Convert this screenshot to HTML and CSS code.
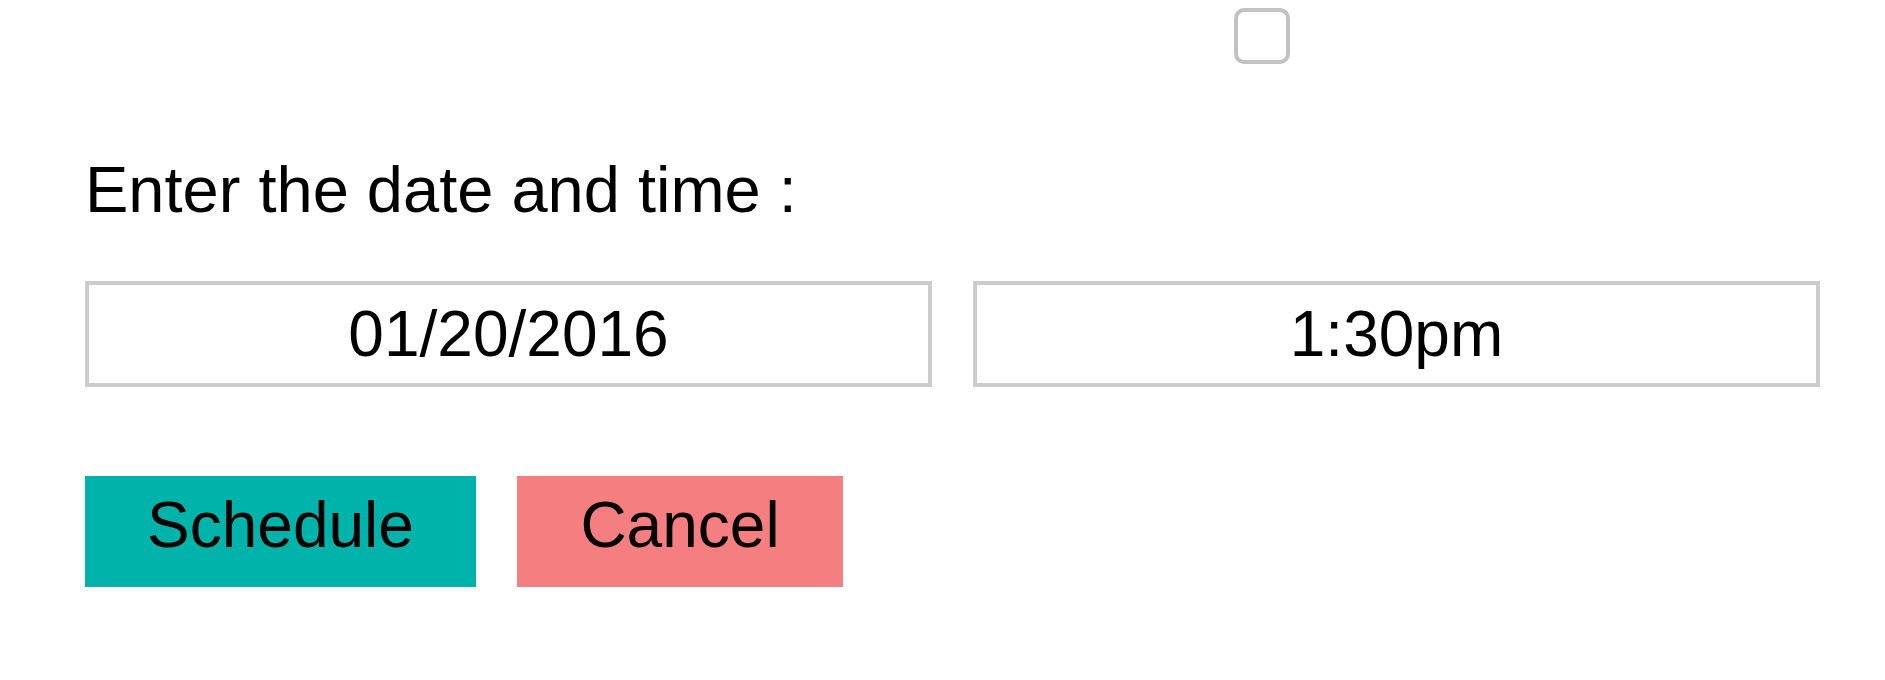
FILE: index.html
```html
<!DOCTYPE html>
<html lang="en">
<head>
<meta charset="utf-8">
<title>Schedule</title>
<link rel="stylesheet" href="styles.css">
</head>
<body>
<div class="page">
  <div class="top-row">
    <input type="checkbox" class="check" aria-label="toggle">
  </div>
  <label class="prompt">Enter the date and time :</label>
  <div class="fields">
    <input type="text" class="field" value="01/20/2016">
    <input type="text" class="field" value="1:30pm">
  </div>
  <div class="actions">
    <button class="btn btn-schedule">Schedule</button>
    <button class="btn btn-cancel">Cancel</button>
  </div>
</div>
</body>
</html>
```

FILE: styles.css
```css
html, body {
  margin: 0;
  padding: 0;
  background: #ffffff;
}

.page {
  display: flex;
  flex-direction: column;
  padding: 0 65px 0 85px;
  font-family: "Liberation Sans", Arial, sans-serif;
  color: #000;
}

.top-row {
  display: flex;
  padding-top: 8px;
  height: 56px;
}

.check {
  appearance: none;
  -webkit-appearance: none;
  margin: 0 0 0 1149px;
  width: 56px;
  height: 56px;
  box-sizing: border-box;
  border: 4px solid #c2c2c2;
  border-radius: 10px;
  background: #fff;
}

.prompt {
  display: block;
  margin-top: 89px;
  font-size: 65px;
  line-height: 74px;
}

.fields {
  display: flex;
  gap: 41px;
  margin-top: 54px;
}

.field {
  flex: 1;
  min-width: 0;
  height: 106px;
  box-sizing: border-box;
  border: 4px solid #cccccc;
  padding: 0;
  margin: 0;
  font-family: "Liberation Sans", Arial, sans-serif;
  font-size: 64px;
  text-align: center;
  color: #000;
  background: #fff;
  outline: none;
}

.actions {
  display: flex;
  gap: 41px;
  margin-top: 89px;
}

.btn {
  height: 111px;
  box-sizing: border-box;
  border: none;
  margin: 0;
  padding: 13px 62px 26px;
  font-family: "Liberation Sans", Arial, sans-serif;
  font-size: 64px;
  line-height: 72px;
  color: #000;
}

.btn-schedule {
  background: #00b3aa;
}

.btn-cancel {
  padding-left: 63.5px;
  padding-right: 63.5px;
  background: #f47e80;
}
```
